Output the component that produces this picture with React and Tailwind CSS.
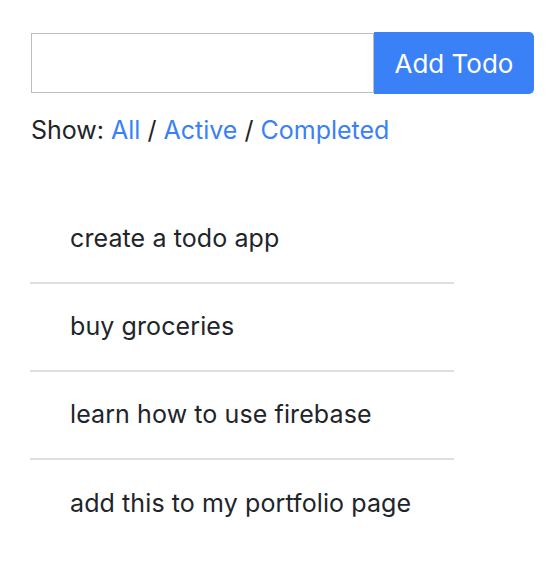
export default function App() {
  const todos = [
    "create a todo app",
    "buy groceries",
    "learn how to use firebase",
    "add this to my portfolio page",
  ];
  return (
    <div
      className="min-h-[568px] bg-white pl-[30px] pt-[32px] text-[#212529]"
      style={{ fontFamily: "Inter, 'Liberation Sans', sans-serif" }}
    >
      <div className="flex items-center">
        <input
          type="text"
          className="ml-px h-[60px] w-[343px] border border-[#bdbdbd] outline-none"
        />
        <button className="h-[62px] w-[160px] rounded-r-[5px] bg-[#3a80f6] text-[26px] text-white">
          Add Todo
        </button>
      </div>
      <div className="mt-[18px] h-[36px] pl-px text-[25px] leading-[36px]">
        Show: <span className="text-[#3a80f6]">All</span> /{" "}
        <span className="text-[#3a80f6]">Active</span> /{" "}
        <span className="text-[#3a80f6]">Completed</span>
      </div>
      <ul className="mt-[48px] w-[424px]">
        {todos.map((t, i) => (
          <li
            key={t}
            className={`flex h-[88px] items-center pl-[40px] text-[25px] tracking-[0.1px] ${
              i < todos.length - 1 ? "border-b-2 border-[#dedede]" : ""
            }`}
          >
            <span>{t}</span>
          </li>
        ))}
      </ul>
    </div>
  );
}
